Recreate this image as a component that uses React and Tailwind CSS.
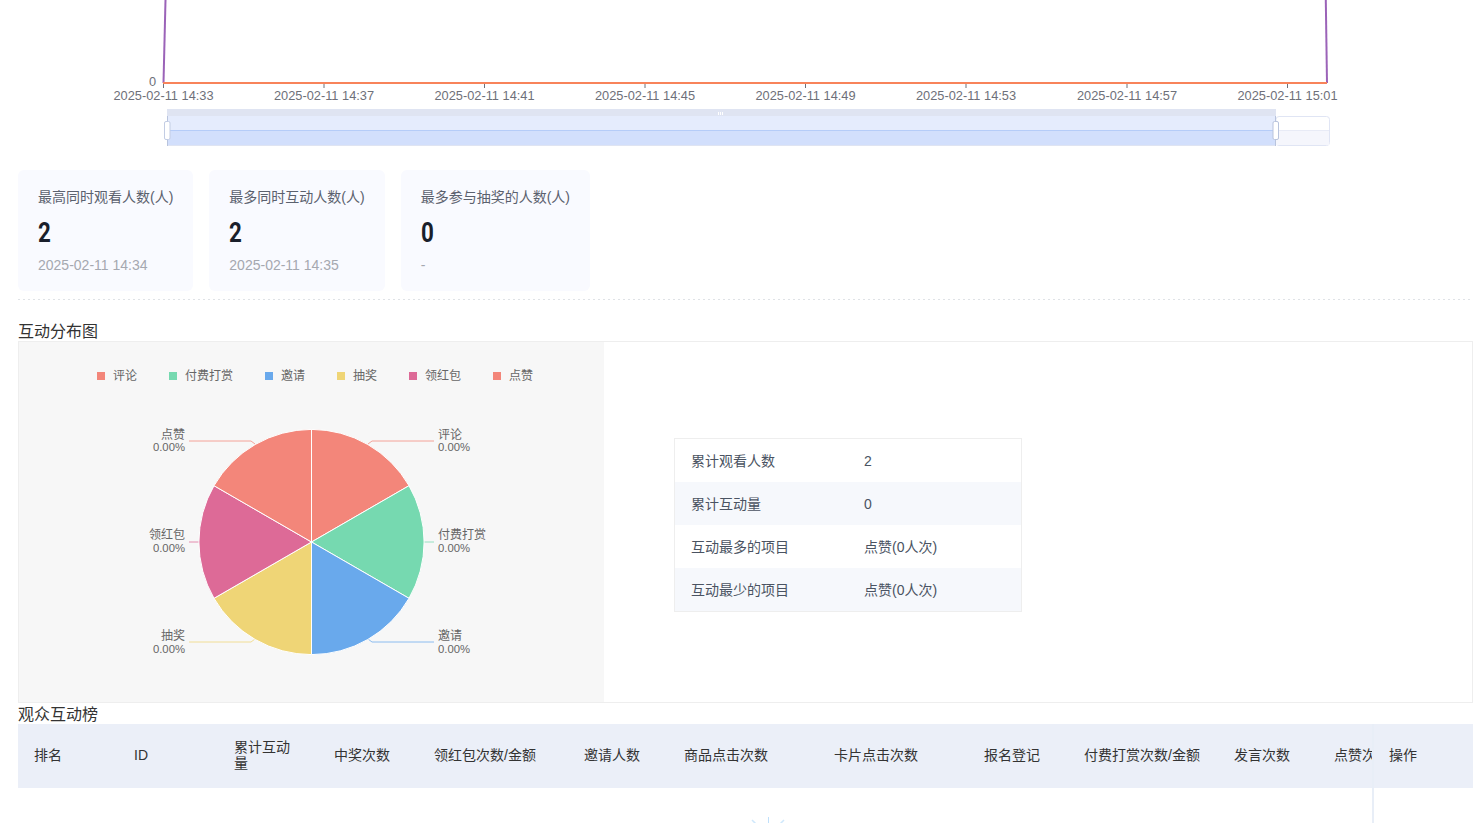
const FONT = "font-['Liberation_Sans','Noto_Sans_CJK_SC',sans-serif]";

const TICKS = [
  [163.5, "2025-02-11 14:33"],
  [324, "2025-02-11 14:37"],
  [484.5, "2025-02-11 14:41"],
  [645, "2025-02-11 14:45"],
  [805.5, "2025-02-11 14:49"],
  [966, "2025-02-11 14:53"],
  [1127, "2025-02-11 14:57"],
  [1287.5, "2025-02-11 15:01"],
];

const CARDS = [
  { title: "最高同时观看人数(人)", value: "2", time: "2025-02-11 14:34" },
  { title: "最多同时互动人数(人)", value: "2", time: "2025-02-11 14:35" },
  { title: "最多参与抽奖的人数(人)", value: "0", time: "-" },
];

const LEGEND = [
  ["评论", "bg-[#f3867a]"],
  ["付费打赏", "bg-[#76d9b0]"],
  ["邀请", "bg-[#69a9ec]"],
  ["抽奖", "bg-[#efd576]"],
  ["领红包", "bg-[#dd6a97]"],
  ["点赞", "bg-[#f3867a]"],
];

const SECTORS = [
  ["#f3867a", "311.5,429.4", "409,485.7"],
  ["#76d9b0", "409,485.7", "409,598.3"],
  ["#69a9ec", "409,598.3", "311.5,654.6"],
  ["#efd576", "311.5,654.6", "214,598.3"],
  ["#dd6a97", "214,598.3", "214,485.7"],
  ["#f3867a", "214,485.7", "311.5,429.4"],
];

const LEADERS = [
  ["#f3867a", "368,444 372,441 434,441"],
  ["#76d9b0", "424,542 434,542"],
  ["#69a9ec", "368,639 372,642 434,642"],
  ["#efd576", "255,639 251,642 189,642"],
  ["#dd6a97", "199,542 189,542"],
  ["#f3867a", "255,444 251,441 189,441"],
];

const LABELS = [
  ["评论", 438, 438.5, 451, "start"],
  ["付费打赏", 438, 538.5, 552, "start"],
  ["邀请", 438, 639.5, 653, "start"],
  ["抽奖", 185, 639.5, 653, "end"],
  ["领红包", 185, 538.5, 552, "end"],
  ["点赞", 185, 438.5, 451, "end"],
];

const SUMMARY = [
  ["累计观看人数", "2"],
  ["累计互动量", "0"],
  ["互动最多的项目", "点赞(0人次)"],
  ["互动最少的项目", "点赞(0人次)"],
];

const COLUMNS = [
  ["排名", "w-[100px]"],
  ["ID", "w-[100px]"],
  ["累计互动量", "w-[100px]"],
  ["中奖次数", "w-[100px]"],
  ["领红包次数/金额", "w-[150px]"],
  ["邀请人数", "w-[100px]"],
  ["商品点击次数", "w-[150px]"],
  ["卡片点击次数", "w-[150px]"],
  ["报名登记", "w-[100px]"],
  ["付费打赏次数/金额", "w-[150px]"],
  ["发言次数", "w-[100px]"],
  ["点赞次数", "w-[100px]"],
];

function TrendChart() {
  return (
    <svg viewBox="0 0 1473 170" className="block w-[1473px] h-[170px] -ml-[18px]">
      <text x="156" y="86" textAnchor="end" fontSize="12.8" fill="#6e7079">0</text>
      <path d="M165.5 0 L163.5 83" stroke="#9b63b8" strokeWidth="2" fill="none" />
      <path d="M1325.8 0 L1327 83" stroke="#9b63b8" strokeWidth="2" fill="none" />
      <path d="M163 83 H1327" stroke="#f8835a" strokeWidth="2" fill="none" />
      {TICKS.map(([x, label]) => (
        <g key={label}>
          <path d={`M${x} 84 V88`} stroke="#6e7079" strokeWidth="1" />
          <text x={x} y="100" textAnchor="middle" fontSize="12.8" fill="#6e7079">{label}</text>
        </g>
      ))}
      {/* dataZoom */}
      <rect x="1276" y="116.5" width="53.5" height="29" rx="3" fill="#ffffff" stroke="#e0e5f4" />
      <rect x="1276" y="131" width="53" height="14" fill="#f5f6fc" />
      <path d="M1276 130.5 H1329" stroke="#e8ebf6" />
      <rect x="167" y="109" width="1109" height="7" fill="#dfe4f2" />
      <rect x="167" y="116" width="1109" height="14" fill="#e5ecfd" />
      <rect x="167" y="130" width="1109" height="16" fill="#d2dffc" />
      <path d="M167 130.5 H1276" stroke="#b5ccf8" />
      <path d="M167 145.5 H1276" stroke="#dfe4f2" />
      <path d="M167.5 116 V146 M1275.5 116 V146" stroke="#b9c4dd" />
      <rect x="164.5" y="121.5" width="5.5" height="18" rx="1.5" fill="#ffffff" stroke="#c3cde4" />
      <rect x="1273" y="121.5" width="5.5" height="18" rx="1.5" fill="#ffffff" stroke="#b9c4dd" />
      <path d="M718.5 112 V115 M720.5 112 V115 M722.5 112 V115" stroke="#ffffff" />
    </svg>
  );
}

function StatCard({ title, value, time }) {
  return (
    <div className="bg-[#f9faff] rounded-md px-5 pt-[18px] pb-[17px]">
      <div className="text-sm leading-[18px] text-[#5b616e] whitespace-nowrap">{title}</div>
      <div className="mt-[13px] h-7 text-[28px] leading-7 font-bold text-[#1a1f2b] font-['Roboto',sans-serif] scale-x-[0.8] origin-left">{value}</div>
      <div className="mt-[9px] text-sm leading-[18px] text-[#a5a8b0]">{time}</div>
    </div>
  );
}

function PiePanel() {
  return (
    <div className="w-[585px] bg-[#f7f7f7] flex flex-col">
      <div className="flex gap-8 pl-[78px] pt-[26px]">
        {LEGEND.map(([name, color]) => (
          <div key={name} className="flex items-center gap-2 text-xs leading-4 text-[#666666]">
            <span className={`w-2 h-2 ${color}`} />
            {name}
          </div>
        ))}
      </div>
      <svg viewBox="19 384 585 318" className="block w-[585px] h-[318px]">
        {LEADERS.map(([color, pts], i) => (
          <polyline key={i} points={pts} fill="none" stroke={color} strokeOpacity="0.75" strokeWidth="1" />
        ))}
        {SECTORS.map(([color, a, b], i) => (
          <path key={i} d={`M311.5 542 L${a} A112.6 112.6 0 0 1 ${b} Z`} fill={color} stroke="#ffffff" strokeWidth="1" />
        ))}
        {LABELS.map(([name, x, y, y2, anchor]) => (
          <g key={name} fill="#666666" textAnchor={anchor}>
            <text x={x} y={y} fontSize="12">{name}</text>
            <text x={x} y={y2} fontSize="11.3">0.00%</text>
          </g>
        ))}
      </svg>
    </div>
  );
}

function SummaryTable() {
  return (
    <div className="w-[348px] border border-[#eeeeee] text-sm">
      {SUMMARY.map(([label, value], i) => (
        <div key={label} className={`flex items-center h-[43px] pl-4 ${i % 2 ? "bg-[#f6f8fc]" : "bg-white"}`}>
          <div className="w-[173px] text-[#4a5362]">{label}</div>
          <div className="text-[#4a5362]">{value}</div>
        </div>
      ))}
    </div>
  );
}

function RankTable() {
  return (
    <div className="flex text-sm text-[#333333]">
      <div className="w-[1354px] overflow-hidden">
        <div className="flex h-16 pb-0.5 bg-[#ebeff8] items-center w-max">
          {COLUMNS.map(([name, w]) => (
            <div key={name} className={`${w} px-4 leading-4 shrink-0`}>{name}</div>
          ))}
        </div>
        <svg viewBox="0 0 36 8" className="block w-9 h-2 mt-[29px] ml-[732px]">
          <path d="M18.5 0 V8" stroke="#bfe0fb" strokeWidth="1" />
          <path d="M2 3 L6 7 M34 3 L30 7" stroke="#cfe8fc" strokeWidth="1.5" />
        </svg>
      </div>
      <div className="w-[101px] border-l-2 border-[#e8eef7]">
        <div className="h-16 pb-0.5 bg-[#ebeff8] flex items-center pl-[15px]">操作</div>
      </div>
    </div>
  );
}

export default function App() {
  return (
    <div className={`${FONT} w-[1473px] h-[823px] overflow-hidden bg-white pl-[18px]`}>
      <TrendChart />
      <div className="flex gap-4">
        {CARDS.map((c) => (
          <StatCard key={c.title} {...c} />
        ))}
      </div>
      <div className="mt-2 h-px bg-[repeating-linear-gradient(90deg,#dfe2e6_0_2px,transparent_2px_5px)]" />
      <h3 className="mt-5 pt-[2px] text-base leading-[19px] text-[#333333]">互动分布图</h3>
      <div className="flex items-start border border-[#eeeeee]">
        <PiePanel />
        <div className="ml-[70px] mt-24">
          <SummaryTable />
        </div>
      </div>
      <h3 className="pt-[2px] text-base leading-[19px] text-[#333333]">观众互动榜</h3>
      <RankTable />
    </div>
  );
}
